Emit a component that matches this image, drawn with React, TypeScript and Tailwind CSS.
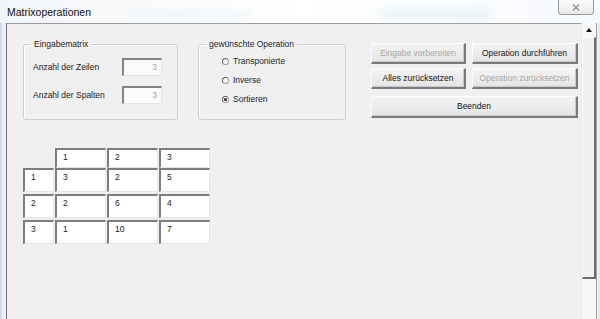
import React from 'react';

const font = { fontFamily: '"Liberation Sans", Arial, sans-serif' };

function TextBox({ value }: { value: string }) {
  return (
    <div className="w-[40px] h-[18px] bg-[#fbfbfb] border-t-2 border-l-2 border-b border-r border-t-[#838383] border-l-[#838383] border-b-[#e6e6e6] border-r-[#e6e6e6] flex items-center justify-end pr-[4px] text-[8.5px] text-[#a3a3a3]">
      {value}
    </div>
  );
}

function Radio({ label, checked }: { label: string; checked?: boolean }) {
  return (
    <div className="flex items-center h-[19px]">
      <span className="w-[7px] h-[7px] rounded-full border border-[#9a9a9a] border-t-[#5a5a5a] border-l-[#5a5a5a] bg-white flex items-center justify-center">
        {checked && <span className="w-[3px] h-[3px] rounded-full bg-[#222]" />}
      </span>
      <span className="ml-[4px] text-[8.5px] text-[#1e1e1e]">{label}</span>
    </div>
  );
}

function WinButton({ label, disabled, className }: { label: string; disabled?: boolean; className?: string }) {
  return (
    <div
      className={
        'h-[21px] flex items-center justify-center text-[8.5px] bg-gradient-to-b from-[#f4f4f4] to-[#e4e4e4] border-t border-l border-t-[#fdfdfd] border-l-[#fdfdfd] border-b-2 border-r-2 border-b-[#7a7a7a] border-r-[#7a7a7a] shadow-[inset_-1px_-1px_0_#c8c8c8] ' +
        (disabled ? 'text-[#a8a8a8] ' : 'text-[#151515] ') +
        (className ?? '')
      }
    >
      {label}
    </div>
  );
}

function Cell({ value, w = 'w-[51px]', h = 'h-[24px]' }: { value?: string; w?: string; h?: string }) {
  return (
    <div className={`${w} ${h} bg-white border-t-2 border-l-2 border-b border-r border-t-[#7d7d7d] border-l-[#7d7d7d] border-b-[#e4e4e4] border-r-[#e4e4e4] pl-[6px] pt-[2px] text-[8.5px] text-[#1a1a1a] leading-[11px]`}>
      {value}
    </div>
  );
}

const rows = [
  ['1', '3', '2', '5'],
  ['2', '2', '6', '4'],
  ['3', '1', '10', '7'],
];

export default function App() {
  return (
    <div className="w-[600px] h-[319px] overflow-hidden flex flex-col bg-[#eef2f6]" style={font}>
      {/* title bar */}
      <div className="h-[23px] flex items-start bg-gradient-to-r from-[#f3f6f9] via-[#ffffff] to-[#f6f9fc] relative">
        <div className="absolute left-[380px] top-[10px] w-[110px] h-[8px] bg-[#d9eef7] blur-[4px] opacity-70" />
        <div className="absolute left-[130px] top-[12px] w-[120px] h-[6px] bg-[#e4f0f6] blur-[4px] opacity-70" />
        <span className="relative ml-[7px] mt-[5px] text-[10.5px] text-[#111] leading-[14px]">Matrixoperationen</span>
        <div className="relative ml-auto mr-[6px] w-[36px] h-[15px] border border-t-0 border-[#9a9a9a] rounded-b-[4px] bg-gradient-to-b from-[#fafafa] to-[#eaeaea] flex items-center justify-center">
          <svg width="8" height="7" viewBox="0 0 8 7" fill="none" stroke="#8c8c8c" strokeWidth="1.2">
            <path d="M1 0.5 L7 6.5 M7 0.5 L1 6.5" />
          </svg>
        </div>
      </div>

      <div className="flex-1 flex">
        {/* left frame */}
        <div className="w-[7px] bg-gradient-to-r from-[#c9d3dd] via-[#eef2f6] to-[#eef2f6] border-r border-[#6f6f6f]" />

        {/* client */}
        <div className="w-[574px] bg-[#f0f0f0] border-t border-[#9a9a9a] pl-[16px] pt-[14px]">
          <div className="flex items-start">
            <fieldset className="w-[155px] h-[82px] border border-[#cfcfcf] rounded-[3px] shadow-[inset_1px_1px_0_#fff]">
              <legend className="ml-[7px] px-[3px] text-[8.5px] leading-[12px] text-[#1a1a1a]">Eingabematrix</legend>
              <div className="pl-[9px] pt-[8px] flex flex-col gap-[10px]">
                <div className="flex items-center justify-between pr-[15px]">
                  <span className="text-[8.5px] text-[#1a1a1a]">Anzahl der Zeilen</span>
                  <TextBox value="3" />
                </div>
                <div className="flex items-center justify-between pr-[15px]">
                  <span className="text-[8.5px] text-[#1a1a1a]">Anzahl der Spalten</span>
                  <TextBox value="3" />
                </div>
              </div>
            </fieldset>

            <fieldset className="ml-[20px] w-[148px] h-[82px] border border-[#cfcfcf] rounded-[3px] shadow-[inset_1px_1px_0_#fff]">
              <legend className="ml-[7px] px-[3px] text-[8.5px] leading-[12px] text-[#1a1a1a]">gewünschte Operation</legend>
              <div className="pl-[23px] pt-[2px] flex flex-col">
                <Radio label="Transponierte" />
                <Radio label="Inverse" />
                <Radio label="Sortieren" checked />
              </div>
            </fieldset>

            <div className="ml-[25px] mt-[5px] w-[207px] flex flex-col">
              <div className="flex gap-[6px]">
                <WinButton label="Eingabe vorbereiten" disabled className="w-[95px]" />
                <WinButton label="Operation durchführen" className="w-[106px]" />
              </div>
              <div className="flex gap-[6px] mt-[4px]">
                <WinButton label="Alles zurücksetzen" className="w-[95px]" />
                <WinButton label="Operation zurücksetzen" disabled className="w-[106px]" />
              </div>
              <WinButton label="Beenden" className="w-[207px] mt-[7px] h-[22px]" />
            </div>
          </div>

          {/* matrix */}
          <div className="mt-[28px] flex flex-col">
            <div className="flex gap-[1px]">
              <div className="w-[31px]" />
              <Cell value="1" h="h-[20px]" />
              <Cell value="2" h="h-[20px]" />
              <Cell value="3" h="h-[20px]" />
            </div>
            <div className="flex flex-col gap-[2px]">
              {rows.map((r) => (
                <div key={r[0]} className="flex gap-[1px]">
                  <Cell value={r[0]} w="w-[31px]" />
                  <Cell value={r[1]} />
                  <Cell value={r[2]} />
                  <Cell value={r[3]} />
                </div>
              ))}
            </div>
          </div>
        </div>

        {/* scrollbar */}
        <div className="w-[15px] flex flex-col bg-[#f7f7f7] border-l border-[#e8e8e8]">
          <div className="h-[14px] flex items-center justify-center">
            <span className="w-0 h-0 border-l-[3px] border-r-[3px] border-b-[4px] border-l-transparent border-r-transparent border-b-[#111]" />
          </div>
          <div className="h-[242px] bg-[#f0f0f0] border-t border-l border-[#fcfcfc] border-r-2 border-b-2 border-r-[#6c6c6c] border-b-[#6c6c6c]" />
        </div>

        {/* right frame */}
        <div className="w-[4px] border-l border-[#9c9c9c] bg-gradient-to-r from-[#f3f6f9] to-[#dde8f2]" />
      </div>
    </div>
  );
}
